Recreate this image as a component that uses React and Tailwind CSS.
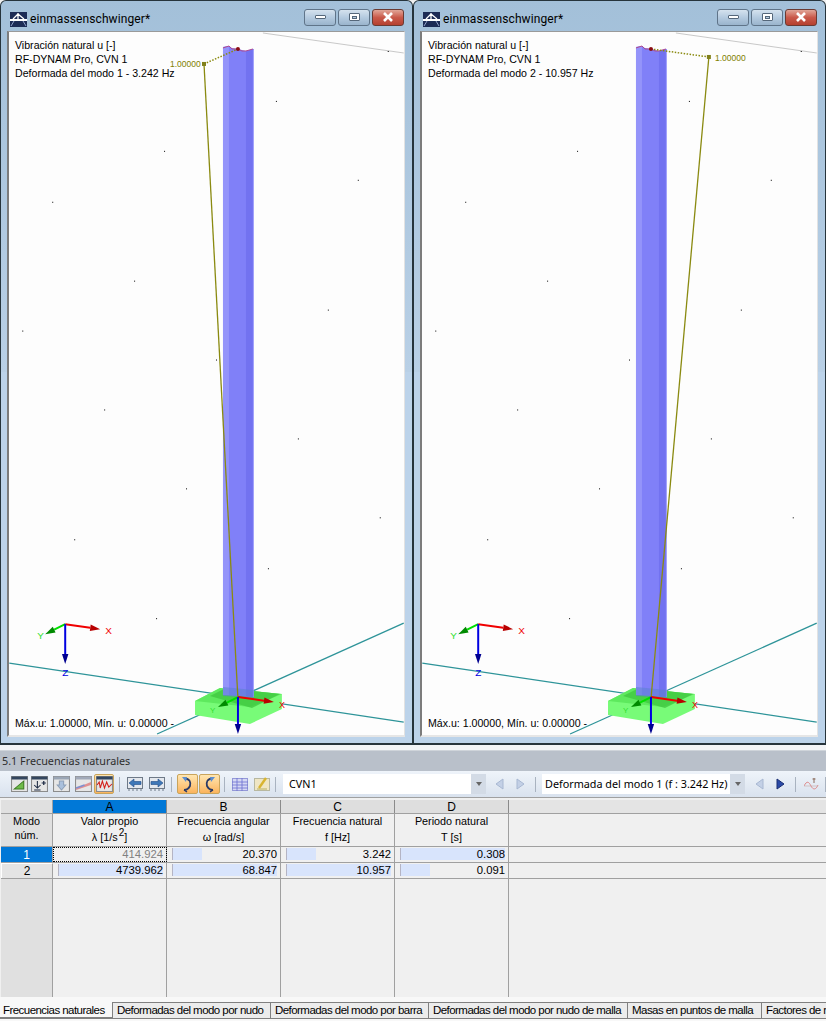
import React from 'react';

const dots = [
    [164, 151], [358, 180], [52, 202], [134, 281], [328, 310], [22, 331], [216, 360], [104, 410],
    [298, 439], [186, 489], [380, 518], [74, 540], [268, 569], [156, 619], [276, 101], [388, 51],
];

const Arrow = ({ x1, y1, x2, y2, color, head, width = 2 }) => {
    const a = Math.atan2(y2 - y1, x2 - x1);
    const len = 10;
    const sx = x2 - Math.cos(a) * len;
    const sy = y2 - Math.sin(a) * len;
    const px = Math.sin(a) * 3.2;
    const py = -Math.cos(a) * 3.2;
    return (
        <g>
            <line x1={x1} y1={y1} x2={sx} y2={sy} stroke={color} strokeWidth={width} />
            <polygon points={`${x2},${y2} ${sx + px},${sy + py} ${sx - px},${sy - py}`} fill={head} />
        </g>
    );
};

const Scene = ({ tipX, tipY }) => (
    <svg viewBox="9 32 395 704" className="absolute inset-0 w-full h-full" shapeRendering="geometricPrecision">
        <line x1="263" y1="33" x2="404" y2="53" stroke="#c8c8c8" strokeWidth="1" />
        {dots.map(([x, y], i) => (
            <rect key={i} x={x} y={y} width="1" height="1" fill="#000" />
        ))}
        <line x1="9" y1="664" x2="404" y2="723" stroke="#2e9499" strokeWidth="1.3" />
        <line x1="157" y1="735" x2="404" y2="624" stroke="#2e9499" strokeWidth="1.3" />

        {/* base plate */}
        <polygon points="195,702 220,689 282,695 282,710 250,725 195,716" fill="#78fb78" />
        <polygon points="195,702 220,689 282,695 250,708" fill="#5ee95e" />
        <polygon points="210,697 226,689 254,692 280,695 252,709" fill="#3fc63f" opacity="0.75" />

        {/* column */}
        <polygon points="223,47 229,46 232,48 238,49 246,51 254,49 254,698 223,696" fill="#8080f8" />
        <polygon points="223,47 229,46 229,696 223,696" fill="#9494fa" />
        <polygon points="246,51 253,49 253,698 246,698" fill="#7272f0" />
        <rect x="253" y="50" width="1" height="648" fill="#a4a4fb" />
        <polyline points="223,48 226,47 229,46 232,49 238,49 242,51 246,51 253,49" fill="none" stroke="#b04a90" strokeWidth="1" />
        <polygon points="223,688 254,691 254,699 223,697" fill="#5a7fd0" opacity="0.55" />

        {/* deformed shape */}
        <line x1={tipX} y1={tipY} x2="238" y2="700" stroke="#8a8a10" strokeWidth="1.3" />
        <line x1={tipX} y1={tipY} x2="238" y2="49" stroke="#8a8a10" strokeWidth="1.5" strokeDasharray="1.5 1.5" />
        <rect x={tipX - 2} y={tipY - 2} width="4" height="4" fill="#80801a" />
        <circle cx="238" cy="49" r="2" fill="#8b0d12" />

        {/* axes at support */}
        <Arrow x1={238} y1={698} x2={274} y2={703} color="#f00000" head="#b80000" />
        <Arrow x1={238} y1={698} x2={218} y2={708} color="#00e000" head="#008a00" />
        <Arrow x1={238} y1={698} x2={238} y2={735} color="#0000e0" head="#000090" />
        <text x="279" y="709" fontSize="9" fill="#f00000" fontFamily="Liberation Sans">X</text>
        <text x="210" y="714" fontSize="8" fill="#30e030" fontFamily="Liberation Sans">Y</text>

        {/* coordinate system */}
        <Arrow x1={65} y1={625} x2={100} y2={630} color="#f00000" head="#b80000" />
        <Arrow x1={65} y1={625} x2={45} y2={635} color="#00e000" head="#008a00" />
        <Arrow x1={65} y1={625} x2={65} y2={665} color="#0000e0" head="#000090" />
        <text x="105" y="635" fontSize="10" fill="#f00000" fontFamily="Liberation Sans">X</text>
        <text x="37" y="640" fontSize="10" fill="#30e030" fontFamily="Liberation Sans">Y</text>
        <text x="62" y="677" fontSize="10" fill="#0000e0" fontFamily="Liberation Sans">Z</text>
    </svg>
);

const Logo = () => (
    <svg width="17" height="15" viewBox="0 0 17 15" className="shrink-0">
        <rect width="17" height="15" fill="#1c2b55" />
        <rect x="0" y="7" width="17" height="2" fill="#fff" />
        <path d="M8 1 L8 7 M8 2 L3 7 M8 2 L14 7" stroke="#fff" strokeWidth="1.3" fill="none" />
        <path d="M4 9 L1 14 M13 9 L16 14" stroke="#8fa0c8" strokeWidth="1" />
    </svg>
);

const WinButton = ({ children, close }) => (
    <div
        className={`w-[32px] h-[17px] rounded-[3px] border flex items-center justify-center ${
            close
                ? 'border-[#6b3a32] bg-gradient-to-b from-[#e0a598] via-[#c9594a] to-[#b5402f]'
                : 'border-[#5f7489] bg-gradient-to-b from-[#d5e2ee] via-[#b4cadf] to-[#9ab4cc]'
        }`}
    >
        {children}
    </div>
);

const ModelWindow = ({ mode, tipX, tipY, labelX, labelY }) => (
    <div className="w-[413px] h-[745px] rounded-t-[6px] border border-[#26343c] border-b-2 bg-gradient-to-b from-[#a3c0d9] via-[#b9d0e6] to-[#bcd3ea] to-[16%] flex flex-col pl-[6px] pr-[7px] pb-[6px]">
        <div className="h-[30px] shrink-0 flex items-center pl-[3px] pt-[6px]">
            <Logo />
            <span className="ml-[3px] text-[12px] text-black font-['Roboto',sans-serif] tracking-[0.1px]">einmassenschwinger*</span>
            <div className="ml-auto flex gap-[2px] mr-[1px] mb-[4px]">
                <WinButton>
                    <div className="w-[11px] h-[4px] bg-white border border-[#55677a] rounded-[1px]" />
                </WinButton>
                <WinButton>
                    <div className="w-[11px] h-[8px] bg-white border border-[#55677a] rounded-[1px] flex items-center justify-center">
                        <div className="w-[5px] h-[3px] bg-[#b4cadf] border border-[#55677a]" />
                    </div>
                </WinButton>
                <WinButton close>
                    <svg width="12" height="10" viewBox="0 0 12 10">
                        <path d="M2 1 L10 9 M10 1 L2 9" stroke="#fff" strokeWidth="2.6" />
                    </svg>
                </WinButton>
            </div>
        </div>
        <div className="relative flex-1 bg-[#fdfdfd] border-l-2 border-l-[#7c7c7c] border-t border-t-[#9a9a9a] border-r border-r-[#e2e2e2] border-b-2 border-b-[#e6e6e6] overflow-hidden font-['Liberation_Sans',sans-serif] text-[10.6px] text-black">
            <Scene tipX={tipX} tipY={tipY} />
            <div className="absolute left-[6px] top-[6px] leading-[14px]">
                <div>Vibración natural u [-]</div>
                <div>RF-DYNAM Pro, CVN 1</div>
                <div>Deformada del modo {mode}</div>
            </div>
            <div className="absolute text-[#808000] text-[8.5px] leading-[12px]" style={{ left: labelX, top: labelY }}>1.00000</div>
            <div className="absolute left-[6px] bottom-[5px] leading-[14px]">Máx.u: 1.00000, Mín. u: 0.00000 -</div>
        </div>
    </div>
);

const Cube = ({ children, active, w = 'w-[18px]' }) => (
    <div className={`${w} h-[20px] shrink-0 flex items-center justify-center ${active ? 'rounded-[2px] border border-[#c9a45c] bg-gradient-to-b from-[#ffe6b0] to-[#fbb45c]' : ''}`}>
        {children}
    </div>
);

const Sep = () => <div className="w-px h-[15px] bg-[#a9b3c0] shrink-0" />;

const TableIcon = ({ children, head = '#33465f' }) => (
    <svg width="17" height="16" viewBox="0 0 16 16" preserveAspectRatio="none">
        <rect x="0.5" y="0.5" width="15" height="15" fill="#e6e6e6" stroke="#8c8c8c" />
        <rect x="0.5" y="0.5" width="15" height="3" fill={head} />
        {children}
    </svg>
);

const ArrowBoxIcon = ({ dir }) => (
    <svg width="16" height="15" viewBox="0 0 16 15">
        <rect x="0.5" y="0.5" width="15" height="11" fill="#e4e8ee" stroke="#6f7a88" />
        <path d={dir === 'l' ? 'M2 6 L7 2 L7 4.5 L14 4.5 L14 7.5 L7 7.5 L7 10 Z' : 'M14 6 L9 2 L9 4.5 L2 4.5 L2 7.5 L9 7.5 L9 10 Z'} fill="#3f78b8" stroke="#1f4a86" strokeWidth="0.6" />
        <path d="M2 12 v2 M6 12 v2 M10 12 v2 M14 12 v2" stroke="#6f7a88" />
    </svg>
);

const Curl = ({ flip }) => (
    <svg width="13" height="17" viewBox="0 0 13 17" style={flip ? { transform: 'scaleX(-1)' } : undefined}>
        <path d="M3 2 C9 3 10 6 9 10 C8 12 6 14 3 14" fill="none" stroke="#2a3a66" strokeWidth="1.8" />
        <path d="M1 1 L6 1 L5 6 Z" fill="#5f8fd0" />
        <path d="M3 14 L6 16" stroke="#2a3a66" strokeWidth="1.4" />
    </svg>
);

const NavTriangle = ({ dir, dark }) => (
    <svg width="9" height="12" viewBox="0 0 9 12" className="shrink-0">
        <path d={dir === 'l' ? 'M8 1 L1 6 L8 11 Z' : 'M1 1 L8 6 L1 11 Z'} fill={dark ? '#2b4aa8' : '#c3d0e6'} stroke={dark ? '#1b2f72' : '#a8b8d2'} strokeWidth="1" />
    </svg>
);

const Combo = ({ text, pad }) => (
    <div className="w-[203px] h-[20px] bg-white flex items-center shrink-0 font-['Noto_Sans',sans-serif] text-[10.8px] text-black">
        <span className={`flex-1 whitespace-nowrap ${pad}`}>{text}</span>
        <div className="w-[15px] h-full bg-[#d3dbe6] flex items-center justify-center">
            <div className="w-0 h-0 border-x-[3.5px] border-x-transparent border-t-[4px] border-t-[#666]" />
        </div>
    </div>
);

const Toolbar = () => (
    <div className="h-[26px] shrink-0 bg-gradient-to-b from-[#eff4fa] to-[#d9e2ee] flex items-center pl-[9px]">
        <Cube w="w-[20px]">
            <TableIcon>
                <path d="M3 13 L12 5 L12 13 Z" fill="#6fbb4a" stroke="#3c7a22" />
            </TableIcon>
        </Cube>
        <Cube w="w-[20px]" >
            <TableIcon>
                <path d="M6 5 V12 M3 9 L6 12 L9 9 M3 14 H9" stroke="#1e2b44" fill="none" />
                <path d="M10 7 H14 M12 5 V9" stroke="#1e2b44" strokeWidth="1.2" />
            </TableIcon>
        </Cube>
        <div className="w-[2px]" />
        <Cube w="w-[20px]">
            <TableIcon head="#9aa6b6">
                <path d="M6 5 H10 V9 H12 L8 14 L4 9 H6 Z" fill="#aac0dc" stroke="#8ea0b8" />
            </TableIcon>
        </Cube>
        <div className="w-[2px]" />
        <Cube w="w-[20px]">
            <TableIcon head="#a2aaba">
                <path d="M1 12 L15 6 V9 L1 14 Z" fill="#e09090" />
                <path d="M1 12 L9 9" stroke="#7f8fd0" strokeWidth="1.5" />
            </TableIcon>
        </Cube>
        <div className="w-px" />
        <Cube active w="w-[20px]">
            <TableIcon>
                <path d="M1 9 L3 6 L4 12 L6 5 L8 12 L10 6 L12 11 L15 8" stroke="#d4201a" fill="none" />
            </TableIcon>
        </Cube>
        <div className="w-[5px]" /><Sep /><div className="w-[7px]" />
        <ArrowBoxIcon dir="l" />
        <div className="w-[6px]" />
        <ArrowBoxIcon dir="r" />
        <div className="w-[6px]" /><Sep /><div className="w-[5px]" />
        <Cube active w="w-[21px]"><Curl /></Cube>
        <div className="w-px" />
        <Cube active w="w-[21px]"><Curl flip /></Cube>
        <div className="w-[4px]" /><Sep /><div className="w-[7px]" />
        <svg width="16" height="15" viewBox="0 0 16 15">
            <rect x="0.5" y="1.5" width="15" height="12" fill="#d5d8f4" stroke="#9498d8" />
            <path d="M0 5 H16 M0 8 H16 M0 11 H16 M5 1 V14 M10 1 V14" stroke="#6a6fd0" strokeWidth="0.8" />
        </svg>
        <div className="w-[6px]" />
        <svg width="16" height="16" viewBox="0 0 16 16">
            <rect x="0.5" y="2.5" width="15" height="12" fill="#efe6c4" stroke="#b8b8a0" />
            <path d="M5 12 L12 2" stroke="#d8b430" strokeWidth="2.4" />
            <path d="M3 13 H13" stroke="#b8b060" />
        </svg>
        <div className="w-[5px]" /><Sep /><div className="w-[7px]" />
        <Combo text="CVN1" pad="pl-[6px]" />
        <div className="w-[9px]" />
        <NavTriangle dir="l" />
        <div className="w-[12px]" />
        <NavTriangle dir="r" />
        <div className="w-[10px]" /><Sep /><div className="w-[6px]" />
        <Combo text="Deformada del modo 1 (f : 3.242 Hz)" pad="pl-[3px]" />
        <div className="w-[10px]" />
        <NavTriangle dir="l" />
        <div className="w-[12px]" />
        <NavTriangle dir="r" dark />
        <div className="w-[10px]" /><Sep /><div className="w-[8px]" />
        <svg width="15" height="15" viewBox="0 0 15 15" className="shrink-0">
            <path d="M0 9 C3 3 5 5 7 9 C9 13 12 13 14 8" fill="none" stroke="#e08a8a" strokeWidth="1" />
            <path d="M0 9 H14" stroke="#c8a8a8" strokeWidth="0.6" />
            <path d="M10 1 V6 M8.5 2 H11.5" stroke="#8a6a5a" strokeWidth="1" />
        </svg>
        <div className="w-[6px]" /><Sep />
    </div>
);

const columns = [
    { letter: 'A', title: 'Valor propio', unit: <>λ [1/s<sup className="text-[10px] ml-px">2</sup>]</> },
    { letter: 'B', title: 'Frecuencia angular', unit: 'ω [rad/s]' },
    { letter: 'C', title: 'Frecuencia natural', unit: 'f [Hz]' },
    { letter: 'D', title: 'Periodo natural', unit: 'T [s]' },
];

const rows = [
    [{ v: '414.924', bar: 0 }, { v: '20.370', bar: 30 }, { v: '3.242', bar: 30 }, { v: '0.308', bar: 105 }],
    [{ v: '4739.962', bar: 105 }, { v: '68.847', bar: 105 }, { v: '10.957', bar: 105 }, { v: '0.091', bar: 30 }],
];

const Grid = () => (
    <div className="h-[200px] shrink-0 bg-[#f0f0f0] border-t border-t-[#a0a0a0] pt-[2px] pl-px font-['Liberation_Sans',sans-serif] text-[10.8px] text-black leading-none flex flex-col">
        <div className="flex h-[14px] shrink-0 border-b border-[#a0a0a0]">
            <div className="w-[52px] bg-[#e0e0e0] border-r border-[#a0a0a0]" />
            {columns.map((c, i) => (
                <div
                    key={c.letter}
                    className={`w-[114px] flex items-center justify-center border-r border-[#8a8a8a] text-[12px] ${i === 0 ? 'bg-[#0078d7]' : 'bg-[#dedede]'}`}
                >
                    {c.letter}
                </div>
            ))}
            <div className="flex-1 bg-[#e4e4e4]" />
        </div>
        <div className="flex h-[33px] shrink-0 border-b border-[#a0a0a0]">
            <div className="w-[52px] bg-[#e0e0e0] border-r border-[#a0a0a0] flex flex-col items-center justify-center gap-[3px] pb-[4px]">
                <span>Modo</span>
                <span>núm.</span>
            </div>
            {columns.map((c) => (
                <div key={c.letter} className="w-[114px] border-r border-[#a0a0a0] flex flex-col items-center justify-center gap-[5px] leading-[11px] pb-[2px]">
                    <span>{c.title}</span>
                    <span>{c.unit}</span>
                </div>
            ))}
        </div>
        {rows.map((row, r) => (
            <div key={r} className="flex h-[16px] shrink-0 border-b border-[#a0a0a0]">
                <div className={`w-[52px] border-r border-[#a0a0a0] flex items-center justify-center text-[12px] ${r === 0 ? 'bg-[#0078d7] text-white' : 'bg-[#e4e4e4] border-l border-l-white border-t border-t-white'}`}>
                    {r + 1}
                </div>
                {row.map((cell, c) => (
                    <div
                        key={c}
                        className={`relative w-[114px] border-r border-[#a0a0a0] flex items-center justify-end pr-[3px] text-[11.3px] ${
                            r === 0 && c === 0 ? 'outline outline-1 -outline-offset-1 outline-dotted outline-black text-[#808080]' : ''
                        }`}
                    >
                        {cell.bar > 0 && (
                            <div className="absolute left-[5px] top-[1px] bottom-[2px] bg-[#d8e4fc] border-l border-l-[#b4b4c4]" style={{ width: cell.bar }} />
                        )}
                        <span className="relative">{cell.v}</span>
                    </div>
                ))}
            </div>
        ))}
        <div className="flex flex-1">
            <div className="w-[52px] bg-[#e0e0e0] border-r border-[#a0a0a0]" />
            {columns.map((c) => (
                <div key={c.letter} className="w-[114px] border-r border-[#a0a0a0]" />
            ))}
        </div>
    </div>
);

const tabs = [
    ['Frecuencias naturales', 'w-[112px]'],
    ['Deformadas del modo por nudo', 'w-[158px]'],
    ['Deformadas del modo por barra', 'w-[158px]'],
    ['Deformadas del modo por nudo de malla', 'w-[199px]'],
    ['Masas en puntos de malla', 'w-[134px]'],
    ['Factores de masa modal', 'flex-1'],
];

const Tabs = () => (
    <div className="flex-1 bg-[#f8f8f8] flex items-start font-['Liberation_Sans',sans-serif] text-[11.5px] tracking-[-0.55px] text-black overflow-hidden">
        {tabs.map(([label, w], i) => (
            <div
                key={label}
                className={`${w} whitespace-nowrap overflow-hidden ${
                    i === 0
                        ? 'h-[22px] bg-[#f8f8f8] border-b-2 border-b-[#808080] pl-[3px] pt-[6px] leading-[14px]'
                        : 'h-[17px] mt-[5px] bg-[#ececec] border-l border-t border-b border-[#808080] pl-[4px] leading-[15px]'
                }`}
            >
                {label}
            </div>
        ))}
    </div>
);

const App = () => (
    <div className="w-[826px] h-[1021px] flex flex-col overflow-hidden bg-[#f0f0f0]">
        <div className="flex shrink-0">
            <ModelWindow mode="1 - 3.242 Hz" tipX={204} tipY={64} labelX={161} labelY={26} />
            <ModelWindow mode="2 - 10.957 Hz" tipX={296} tipY={57} labelX={293} labelY={20} />
        </div>
        <div className="h-[6px] shrink-0 bg-[#f2f4f7] border-b border-[#cfd4da]" />
        <div className="h-[20px] shrink-0 bg-[#b9c0ca] flex items-center pl-[2px] font-['Noto_Sans',sans-serif] text-[10.8px] text-[#2e2e2e]">
            5.1 Frecuencias naturales
        </div>
        <Toolbar />
        <Grid />
        <Tabs />
    </div>
);

export default App;
